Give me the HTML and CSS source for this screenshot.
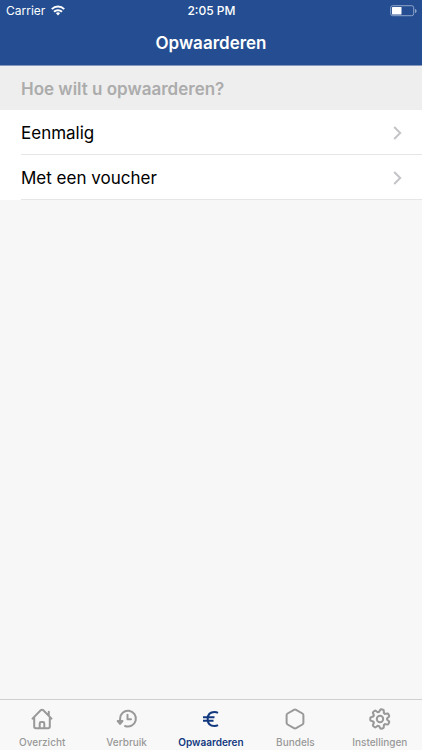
FILE: index.html
```html
<!DOCTYPE html>
<html lang="nl">
<head>
<meta charset="utf-8">
<meta name="viewport" content="width=device-width, initial-scale=1">
<title>Opwaarderen</title>
<link rel="stylesheet" href="styles.css">
</head>
<body>
<header class="header">
  <div class="status">
    <div class="carrier">
      <span>Carrier</span>
      <svg width="14" height="11" viewBox="0 0 14 11" fill="none" stroke="#fff" stroke-width="2" aria-hidden="true">
        <path d="M.8 4.100a8.800 8.800 0 0 1 12.400 0M3 6.800a5.700 5.700 0 0 1 8 0"/>
        <path d="M4.900 8.300a3 3 0 0 1 4.200 0L7 10.500z" fill="#fff" stroke="none"/>
      </svg>
    </div>
    <span class="time">2:05 PM</span>
    <div class="battery">
      <svg width="27" height="12" viewBox="0 0 27 12" aria-hidden="true">
        <rect x=".7" y=".7" width="23" height="10" rx="2" fill="none" stroke="#8fa5cb"/>
        <rect x="2" y="2" width="9.500" height="7.500" rx=".5" fill="#fff"/>
        <path d="M25 4v4c1-.3 1.600-1.100 1.600-2S26 4.300 25 4z" fill="#8fa5cb"/>
      </svg>
    </div>
  </div>
  <h1 class="title">Opwaarderen</h1>
</header>
<main class="content">
  <h2 class="question">Hoe wilt u opwaarderen?</h2>
  <ul class="options">
    <li><a class="option" href="#eenmalig"><span>Eenmalig</span><svg class="chevron" width="9" height="14" viewBox="0 0 9 14" aria-hidden="true"><path d="M1.200 1 7.200 7l-6 6"/></svg></a></li>
    <li><a class="option" href="#voucher"><span>Met een voucher</span><svg class="chevron" width="9" height="14" viewBox="0 0 9 14" aria-hidden="true"><path d="M1.200 1 7.200 7l-6 6"/></svg></a></li>
  </ul>
</main>
<nav class="tabs">
  <a class="tab" href="#overzicht">
    <svg class="icon" viewBox="0 0 24 24" aria-hidden="true"><path d="M2.500 11.600 10.700 3.300q1.300-1.200 2.600 0l8.200 8.300M4.200 10.500v9q0 1.700 1.700 1.700h12.200q1.700 0 1.700-1.700v-9M18.800 4.700v4M9.700 21v-4.500q0-1.400 1.400-1.400h1.800q1.400 0 1.400 1.400v4.500"/></svg>
    <span>Overzicht</span>
  </a>
  <a class="tab" href="#verbruik">
    <svg class="icon" viewBox="0 0 24 24" aria-hidden="true"><path d="M5.100 15v-3.200a7.900 7.900 0 1 1 5 7.200"/><path d="M2.700 14h4.800l-2.400 2.900z" fill="currentColor"/><path d="M12.500 7.800v4.500h3.500"/></svg>
    <span>Verbruik</span>
  </a>
  <a class="tab active" href="#opwaarderen" aria-current="page">
    <svg class="icon euro" viewBox="0 0 24 24" aria-hidden="true"><path d="M19 5.900q-1.600-.9-3.500-.9c-4.600 0-6.800 2.900-6.800 7s2.200 7 6.800 7q1.900 0 3.500-.9M4 10.200h11.500M4 13.700h10.500"/></svg>
    <span>Opwaarderen</span>
  </a>
  <a class="tab" href="#bundels">
    <svg class="icon" viewBox="0 0 24 24" aria-hidden="true"><path d="M10.900 2.900 4.600 6.500q-1 .6-1 1.700v7.600q0 1.100 1 1.700l6.300 3.600q1.100.6 2.200 0l6.300-3.600q1-.6 1-1.700V8.200q0-1.100-1-1.700l-6.300-3.600q-1.100-.6-2.200 0z"/></svg>
    <span>Bundels</span>
  </a>
  <a class="tab" href="#instellingen">
    <svg class="icon" viewBox="0 0 24 24" aria-hidden="true">
      <defs><path id="tooth" d="M5.500 8.900 5.200 9.600 2.900 10.200q-.6.200-.6.800v2q0 .6.600.8l2.300.6.300.7"/></defs>
      <use href="#tooth"/>
      <use href="#tooth" transform="rotate(51.430 12 12)"/>
      <use href="#tooth" transform="rotate(102.860 12 12)"/>
      <use href="#tooth" transform="rotate(154.290 12 12)"/>
      <use href="#tooth" transform="rotate(205.710 12 12)"/>
      <use href="#tooth" transform="rotate(257.140 12 12)"/>
      <use href="#tooth" transform="rotate(308.570 12 12)"/>
      <circle cx="12" cy="12" r="3.200"/>
    </svg>
    <span>Instellingen</span>
  </a>
</nav>
</body>
</html>
```
FILE: styles.css
```css
* {
  box-sizing: border-box;
}

body {
  margin: 0;
  min-height: 100vh;
  display: flex;
  flex-direction: column;
  background: #f7f7f7;
  color: #000;
  font-family: Inter, "Liberation Sans", sans-serif;
}

a {
  color: inherit;
  text-decoration: none;
}

svg {
  display: block;
}

.header {
  background: #244e91;
  color: #fff;
  border-bottom: 1px solid #8499bd;
}

.status {
  display: grid;
  grid-template-columns: 1fr auto 1fr;
  align-items: center;
  height: 21px;
  padding: 0 5px 0 6px;
  font-size: 12px;
}

.carrier {
  display: flex;
  align-items: center;
  gap: 6px;
}

.time {
  font-weight: 500;
}

.battery {
  display: flex;
  justify-content: flex-end;
}

.title {
  margin: 0;
  font-size: 17px;
  font-weight: 600;
  line-height: 44px;
  text-align: center;
}

.content {
  flex: 1;
}

.question {
  margin: 0;
  padding: 2px 21px 0;
  background: #eee;
  color: #acacac;
  font-size: 17px;
  font-weight: 600;
  line-height: 42px;
}

.options {
  margin: 0;
  padding: 0 0 0 21px;
  list-style: none;
  background: #fff;
}

.option {
  display: flex;
  align-items: center;
  justify-content: space-between;
  height: 45px;
  padding: 1px 20px 0 0;
  border-bottom: 1px solid #e6e6e6;
  font-size: 17px;
}

.chevron {
  fill: none;
  stroke: #c4c4c8;
  stroke-width: 2;
}

.tabs {
  display: grid;
  grid-template-columns: repeat(5, 1fr);
  height: 51px;
  border-top: 1px solid #cfcfcf;
  background: #f8f8f8;
}

.tab {
  display: flex;
  flex-direction: column;
  align-items: center;
  padding-top: 7px;
  color: #999;
  font-size: 10px;
  font-weight: 500;
  line-height: 12px;
  gap: 5px;
}

.active {
  color: #12387f;
  font-weight: 600;
}

.icon {
  width: 24px;
  height: 24px;
  fill: none;
  stroke: currentColor;
  stroke-width: 2;
  stroke-linecap: round;
  stroke-linejoin: round;
}

.euro {
  stroke-linecap: butt;
}
```
